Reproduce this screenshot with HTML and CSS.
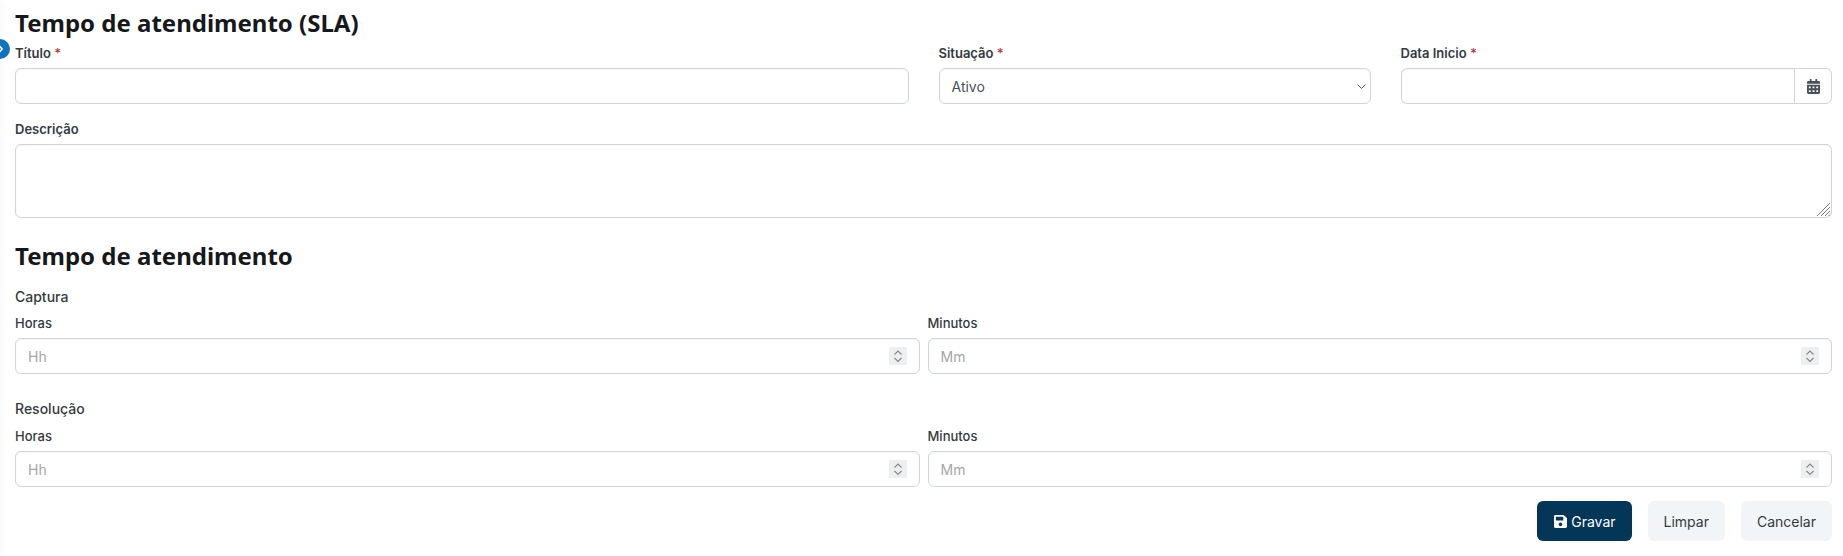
FILE: index.html
```html
<!DOCTYPE html>
<html lang="pt-BR">
<head>
<meta charset="utf-8">
<title>Tempo de atendimento (SLA)</title>
<link rel="stylesheet" href="styles.css">
</head>
<body>
<div class="edge-shadow"></div>
<button class="sidebar-toggle" type="button" aria-label="Expandir">
  <svg viewBox="0 0 8 10" width="6" height="8"><path d="M2 1l3.500 4L2 9" fill="none" stroke="#fff" stroke-width="2"/></svg>
</button>
<main class="page">
  <h2 class="title">Tempo de atendimento (SLA)</h2>
  <form class="form">
    <div class="row-main">
      <div class="field">
        <label class="label strong">Título <span class="req">*</span></label>
        <input class="control" type="text">
      </div>
      <div class="field">
        <label class="label strong">Situação <span class="req">*</span></label>
        <div class="overlay-box">
          <select class="control select"><option>Ativo</option></select>
          <svg class="select-arrow" viewBox="0 0 9 5" width="9" height="5"><path d="M.5.500l4 4 4-4" fill="none" stroke="#4f555b" stroke-width="1"/></svg>
        </div>
      </div>
      <div class="field">
        <label class="label strong">Data Inicio <span class="req">*</span></label>
        <div class="input-group">
          <input class="control group-input" type="text">
          <span class="group-addon">
            <svg viewBox="0 0 448 512" width="13" height="15"><path fill="#495057" d="M0 464c0 26.500 21.500 48 48 48h352c26.500 0 48-21.500 48-48V192H0v272zm320-196c0-6.600 5.400-12 12-12h40c6.600 0 12 5.400 12 12v40c0 6.600-5.400 12-12 12h-40c-6.600 0-12-5.400-12-12v-40zm0 128c0-6.600 5.400-12 12-12h40c6.600 0 12 5.400 12 12v40c0 6.600-5.400 12-12 12h-40c-6.600 0-12-5.400-12-12v-40zM192 268c0-6.600 5.400-12 12-12h40c6.600 0 12 5.400 12 12v40c0 6.600-5.400 12-12 12h-40c-6.600 0-12-5.400-12-12v-40zm0 128c0-6.600 5.400-12 12-12h40c6.600 0 12 5.400 12 12v40c0 6.600-5.400 12-12 12h-40c-6.600 0-12-5.400-12-12v-40zM64 268c0-6.600 5.400-12 12-12h40c6.600 0 12 5.400 12 12v40c0 6.600-5.400 12-12 12H76c-6.600 0-12-5.400-12-12v-40zm0 128c0-6.600 5.400-12 12-12h40c6.600 0 12 5.400 12 12v40c0 6.600-5.400 12-12 12H76c-6.600 0-12-5.400-12-12v-40zM400 64h-48V16c0-8.800-7.200-16-16-16h-32c-8.800 0-16 7.200-16 16v48H160V16c0-8.800-7.200-16-16-16h-32c-8.800 0-16 7.200-16 16v48H48C21.500 64 0 85.500 0 112v48h448v-48c0-26.500-21.500-48-48-48z"/></svg>
          </span>
        </div>
      </div>
    </div>
    <div class="field desc">
      <label class="label strong">Descrição</label>
      <div class="overlay-box">
        <textarea class="control area"></textarea>
        <svg class="resize-hatch" viewBox="0 0 14 14" width="14" height="14"><path d="M1 14L14 1M5 14L14 5M9 14l5-5M12.500 14l1.500-1.500" fill="none" stroke="#7b7f83" stroke-width="1"/></svg>
      </div>
    </div>
    <h2 class="title title-second">Tempo de atendimento</h2>
    <section class="time-block">
      <div class="block-name">Captura</div>
      <div class="row-time">
        <div class="field">
          <label class="label">Horas</label>
          <div class="overlay-box">
            <input class="control" type="number" placeholder="Hh">
            <span class="spin"><svg viewBox="0 0 18 18" width="18" height="18"><path d="M5.500 7.500L9 4l3.500 3.500M5.500 11L9 14.500 12.500 11" fill="none" stroke="#83888d" stroke-width="1.100"/></svg></span>
          </div>
        </div>
        <div class="field">
          <label class="label">Minutos</label>
          <div class="overlay-box">
            <input class="control" type="number" placeholder="Mm">
            <span class="spin"><svg viewBox="0 0 18 18" width="18" height="18"><path d="M5.500 7.500L9 4l3.500 3.500M5.500 11L9 14.500 12.500 11" fill="none" stroke="#83888d" stroke-width="1.100"/></svg></span>
          </div>
        </div>
      </div>
    </section>
    <section class="time-block block-two">
      <div class="block-name">Resolução</div>
      <div class="row-time">
        <div class="field">
          <label class="label">Horas</label>
          <div class="overlay-box">
            <input class="control" type="number" placeholder="Hh">
            <span class="spin"><svg viewBox="0 0 18 18" width="18" height="18"><path d="M5.500 7.500L9 4l3.500 3.500M5.500 11L9 14.500 12.500 11" fill="none" stroke="#83888d" stroke-width="1.100"/></svg></span>
          </div>
        </div>
        <div class="field">
          <label class="label">Minutos</label>
          <div class="overlay-box">
            <input class="control" type="number" placeholder="Mm">
            <span class="spin"><svg viewBox="0 0 18 18" width="18" height="18"><path d="M5.500 7.500L9 4l3.500 3.500M5.500 11L9 14.500 12.500 11" fill="none" stroke="#83888d" stroke-width="1.100"/></svg></span>
          </div>
        </div>
      </div>
    </section>
    <div class="actions">
      <button class="btn btn-primary" type="button">
        <svg viewBox="0 0 448 512" width="13" height="15"><path fill="#fff" d="M433.941 129.941l-83.882-83.882A48 48 0 0 0 316.118 32H48C21.490 32 0 53.490 0 80v352c0 26.510 21.490 48 48 48h352c26.510 0 48-21.490 48-48V163.882a48 48 0 0 0-14.059-33.941zM224 416c-35.346 0-64-28.654-64-64 0-35.346 28.654-64 64-64s64 28.654 64 64c0 35.346-28.654 64-64 64zm96-304.520V212c0 6.627-5.373 12-12 12H76c-6.627 0-12-5.373-12-12V108c0-6.627 5.373-12 12-12h228.520c3.183 0 6.235 1.264 8.485 3.515l3.480 3.480A11.996 11.996 0 0 1 320 111.480z"/></svg>
        Gravar
      </button>
      <button class="btn btn-light" type="button">Limpar</button>
      <button class="btn btn-light" type="button">Cancelar</button>
    </div>
  </form>
</main>
</body>
</html>
```

FILE: styles.css
```css
* { box-sizing: border-box; }

html, body { margin: 0; height: 100%; }

body {
  background: #fff;
  color: #212529;
  font-family: Inter, "Liberation Sans", sans-serif;
  font-size: 14px;
  overflow: hidden;
  position: relative;
}

.edge-shadow {
  position: absolute;
  left: -2px;
  top: 0;
  bottom: 0;
  width: 2px;
  box-shadow: 0 0 9px rgba(0, 0, 0, .1);
}

.sidebar-toggle {
  position: absolute;
  left: -10px;
  top: 39px;
  width: 20px;
  height: 20px;
  border: 0;
  border-radius: 50%;
  background: #0d75bd;
  padding: 0 0 0 8px;
  display: flex;
  align-items: center;
  justify-content: flex-start;
}

.page { padding: 7px 11px 0 15px; }

.title {
  margin: 0;
  font-family: "Noto Sans", sans-serif;
  font-weight: 700;
  font-size: 24px;
  line-height: 32px;
  color: #16181b;
}

.title-second { margin-top: 22px; }

.form { display: flex; flex-direction: column; }

.row-main {
  display: grid;
  grid-template-columns: calc((100% + 30px) / 2 - 30px) 432px 1fr;
  column-gap: 30px;
  margin-top: 6px;
}

.row-time {
  display: grid;
  grid-template-columns: 1fr 1fr;
  column-gap: 8px;
}

.field { display: flex; flex-direction: column; min-width: 0; }

.label {
  font-size: 13px;
  line-height: 16px;
  margin-bottom: 7px;
  color: #343a40;
  font-weight: 500;
}

.strong { font-weight: 600; }

.req { color: #b3404a; }

.overlay-box { position: relative; }

.control {
  display: block;
  width: 100%;
  height: 36px;
  border: 1px solid #ced4da;
  border-radius: 6px;
  padding: 6px 12px;
  background: #fff;
  font-family: inherit;
  font-size: 14px;
  color: #495057;
  outline: none;
  box-shadow: inset 0 1px 2px rgba(0, 0, 0, .04);
}

.control::placeholder { color: #a6a6a6; }

.control::-webkit-inner-spin-button,
.control::-webkit-outer-spin-button { appearance: none; margin: 0; }

.select { appearance: none; }

.select-arrow {
  position: absolute;
  right: 5px;
  top: 16px;
}

.spin {
  position: absolute;
  right: 13px;
  top: 9px;
  width: 18px;
  height: 18px;
  background: #eceef0;
  display: flex;
}

.input-group { display: flex; }

.group-input {
  flex: 1;
  min-width: 0;
  border-radius: 6px 0 0 6px;
  border-right: 0;
}

.group-addon {
  width: 38px;
  height: 36px;
  border: 1px solid #ced4da;
  border-radius: 0 6px 6px 0;
  display: flex;
  align-items: center;
  justify-content: center;
  background: #fff;
}

.desc { margin-top: 17px; }

.area { height: 74px; resize: none; }

.resize-hatch {
  position: absolute;
  right: 2px;
  bottom: 2px;
}

.time-block { margin-top: 16px; }

.block-two { margin-top: 26px; }

.block-name {
  font-size: 14px;
  line-height: 17px;
  font-weight: 500;
  color: #343a40;
  margin-bottom: 10px;
}

.block-two .block-name { margin-bottom: 11px; }

.actions {
  display: flex;
  justify-content: flex-end;
  gap: 16px;
  margin-top: 14px;
}

.btn {
  height: 40px;
  border: 0;
  border-radius: 6px;
  padding: 0 16px;
  font-family: inherit;
  font-size: 14px;
  font-weight: 400;
  display: inline-flex;
  align-items: center;
  gap: 4px;
}

.btn-primary { background: #043657; color: #fff; padding-left: 17px; }

.btn-light { background: #f2f5f8; color: #343a40; }
```
